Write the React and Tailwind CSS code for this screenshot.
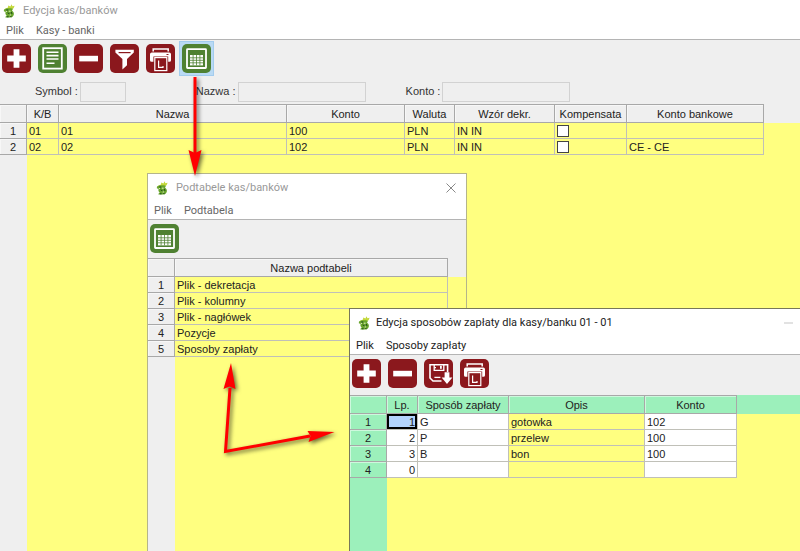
import React from "react";

const RED = "#8b181d";
const GREEN = "#4f8132";

function Tile({ color, children }) {
  return (
    <svg viewBox="0 0 29 29" className="block size-[29px]" aria-hidden="true">
      <rect width="29" height="29" rx="5" fill={color} />
      {children}
    </svg>
  );
}

function PlusIcon() {
  return (
    <Tile color={RED}>
      <path d="M11.6 5.2h5.8v6.4h6.4v5.8h-6.4v6.4h-5.8v-6.4H5.2v-5.8h6.4z" fill="#fff" />
    </Tile>
  );
}

function MinusIcon() {
  return (
    <Tile color={RED}>
      <rect x="5.2" y="11.8" width="18.8" height="5.6" fill="#fff" />
    </Tile>
  );
}

function ListIcon() {
  return (
    <Tile color={GREEN}>
      <rect x="5.2" y="4.2" width="18.6" height="20.4" fill="none" stroke="#fff" strokeWidth="1.8" />
      <path d="M8.500 8.200h12M8.500 11.600h12M8.500 15h12M8.500 19.200h8" stroke="#fff" strokeWidth="1.6" />
    </Tile>
  );
}

function FunnelIcon() {
  return (
    <Tile color={RED}>
      <path d="M5.400 5.800h18.400v2.600L17 15v6.200L12.400 25.400V15L5.400 8.400z" fill="#fff" />
      <path d="M8.600 8.600h12" stroke={RED} strokeWidth="1.2" />
    </Tile>
  );
}

function PrinterIcon() {
  return (
    <Tile color={RED}>
      <path d="M7.200 7.600V5h15v2.600" fill="none" stroke="#fff" strokeWidth="1.500" />
      <path
        d="M4 10.200q0-1.800 1.800-1.800h17.400q1.800 0 1.800 1.800v6q0 1.600-1.600 1.600h-1.200v-5.200H7.400v5.200H5.600q-1.600 0-1.600-1.600z"
        fill="#fff"
      />
      <path d="M20.500 10.500h2" stroke={RED} strokeWidth="1" />
      <rect x="8.800" y="13.600" width="12" height="13" fill={RED} stroke="#fff" strokeWidth="1.200" />
      <path d="M12.600 16.400v7h4.400v-1.400" fill="none" stroke="#fff" strokeWidth="1.200" />
    </Tile>
  );
}

function SaveIcon() {
  return (
    <Tile color={RED}>
      <path d="M17.500 22H9l-3-3V5.800h17.600V13" fill="none" stroke="#fff" strokeWidth="1.6" />
      <path d="M10.200 6v5.400h9.600V6M10 8.600h2" fill="none" stroke="#fff" strokeWidth="1.3" />
      <rect x="16" y="6.800" width="1.800" height="3" fill="#fff" />
      <path d="M10.400 18.400h6" stroke="#fff" strokeWidth="1.3" />
      <path d="M20.600 13.200h4.800v5.400h3L23 25l-5.400-6.400h3z" fill="#fff" />
    </Tile>
  );
}

function TableIcon() {
  return (
    <Tile color={GREEN}>
      <rect x="5" y="5.200" width="19" height="18.800" rx="0.5" fill="none" stroke="#fff" strokeWidth="1.8" />
      <rect x="8" y="11" width="13" height="10.400" fill="#fff" />
      <path
        d="M8 13.800h13M8 16.300h13M8 18.800h13M11.100 11v10.400M14.500 11v10.400M17.900 11v10.400"
        stroke={GREEN}
        strokeWidth="0.8"
      />
    </Tile>
  );
}

function DragonLogo() {
  return (
    <svg viewBox="0 0 12 14" className="block h-3.5 w-3" aria-hidden="true">
      <path d="M2 4.800 5 3.400 5.200 1.400 7.400 2.600 8.600.2 9.400 2.200 11.600 1.800 10.600 4.200 8 5.600 3.600 6.200z" fill="#c3d83a" />
      <path
        d="M1 5.600C3.200 4 6.600 4.200 10 4.800l-1 2c1.600.8 2.200 2.400 1.800 4-.4 1.600-1.800 2.600-3.400 2.800H2.400l.2-1.200 1.200-.6C2.600 11 2 9.400 2.600 8L.8 7.200z"
        fill="#69a52c"
      />
      <path d="M3.200 6h2M4.600 8.800l2 1.200M8.200 8l.8 2M3.800 12.800h1.800M7.200 12.200l1.400.6" stroke="#1f4a1c" strokeWidth="1" />
      <path d="M5.800 7.200h1.800M6.600 11h1.400M2.800 7.400h1.200" stroke="#eef6d4" strokeWidth="0.9" />
    </svg>
  );
}

function ToolButton({ label, icon, active = false }) {
  return (
    <button
      type="button"
      aria-label={label}
      className={active ? "-m-[3px] border border-[#a3ccee] bg-[#b9daf4] p-0.5" : ""}
    >
      {icon}
    </button>
  );
}

function Toolbar({ pad = "pb-1", children }) {
  return <div className={`flex items-center gap-[7px] px-0.5 pt-1 ${pad}`}>{children}</div>;
}

function MenuBar({ items, color }) {
  return (
    <nav className={`flex h-[18px] items-center gap-3 border-b border-[#b4b4b4] bg-white px-1.5 font-[Roboto,sans-serif] text-[11px] ${color}`}>
      {items.map((item) => (
        <button key={item} type="button" className="leading-4">
          {item}
        </button>
      ))}
    </nav>
  );
}

function Filter({ id, label, gap, width }) {
  return (
    <div className={`flex items-center gap-0.5 ${gap}`}>
      <label htmlFor={id}>{label} :</label>
      <input id={id} type="text" readOnly className={`h-5 border border-[#d2d2d2] bg-[#efefef] outline-none ${width}`} />
    </div>
  );
}

function Grid({ columns, rows, tone, strip }) {
  const head = `h-[19px] border-r border-b border-t border-[#a8a8a8] p-0 font-normal shadow-[inset_1px_1px_0_rgba(255,255,255,0.5)] ${tone}`;
  return (
    <div className="flex flex-1 flex-col bg-[#ffff80]">
      <table className="w-full table-fixed border-separate border-spacing-0 text-[11px] leading-[14px] text-[#222]">
        <colgroup>
          <col className={strip} />
          {columns.map((c) => (
            <col key={c.title} className={c.width} />
          ))}
          <col />
        </colgroup>
        <thead>
          <tr>
            <th className={head} />
            {columns.map((c) => (
              <th key={c.title} scope="col" className={head}>
                {c.title}
              </th>
            ))}
            <th className={`p-0 ${tone}`} />
          </tr>
        </thead>
        <tbody>
          {rows.map((row, r) => (
            <tr key={r} className="h-4">
              <th
                scope="row"
                className={`border-r border-b border-[#a8a8a8] px-0 pt-px pb-0 font-normal shadow-[inset_1px_1px_0_rgba(255,255,255,0.5)] ${tone}`}
              >
                {r + 1}
              </th>
              {row.map((cell, c) => {
                const { align = "text-left", fill = "bg-transparent", selectedRow } = columns[c];
                return (
                  <td
                    key={c}
                    className={`overflow-hidden border-r border-b border-[#c0c0b8] px-0.5 pt-px pb-0 whitespace-nowrap ${align} ${
                      selectedRow === r ? "bg-[#b3d4fc] shadow-[inset_0_0_0_2px_#000]" : fill
                    }`}
                  >
                    {cell}
                  </td>
                );
              })}
              <td className="p-0" />
            </tr>
          ))}
        </tbody>
      </table>
      <div className="flex flex-1">
        <div className={`${strip} ${tone}`} />
      </div>
    </div>
  );
}

function Check({ label }) {
  return (
    <input
      type="checkbox"
      aria-label={label}
      className="block size-3 appearance-none border border-[#444] bg-white"
    />
  );
}

const ACCOUNT_COLUMNS = [
  { title: "K/B", width: "w-8" },
  { title: "Nazwa", width: "w-[228px]" },
  { title: "Konto", width: "w-[118px]" },
  { title: "Waluta", width: "w-[50px]" },
  { title: "Wzór dekr.", width: "w-[100px]" },
  { title: "Kompensata", width: "w-[72px]" },
  { title: "Konto bankowe", width: "w-[137px]" },
];

const ACCOUNTS = [
  ["01", "01", "100", "PLN", "IN IN", <Check label="Kompensata 01" />, ""],
  ["02", "02", "102", "PLN", "IN IN", <Check label="Kompensata 02" />, "CE - CE"],
];

const SUBTABLES = [["Plik - dekretacja"], ["Plik - kolumny"], ["Plik - nagłówek"], ["Pozycje"], ["Sposoby zapłaty"]];

const PAYMENT_COLUMNS = [
  { title: "Lp.", width: "w-[31px]", fill: "bg-white", align: "text-right", selectedRow: 0 },
  { title: "Sposób zapłaty", width: "w-[91px]", fill: "bg-white" },
  { title: "Opis", width: "w-[136px]" },
  { title: "Konto", width: "w-[92px]", fill: "bg-white" },
];

const PAYMENTS = [
  ["1", "G", "gotowka", "102"],
  ["2", "P", "przelew", "100"],
  ["3", "B", "bon", "100"],
  ["0", "", "", ""],
];

function Arrows() {
  return (
    <svg
      width="360"
      height="480"
      viewBox="0 0 360 480"
      className="pointer-events-none absolute top-0 left-0 z-30 drop-shadow-[2px_2px_2px_rgba(0,0,0,0.6)]"
      aria-hidden="true"
    >
      <g stroke="#f00" strokeWidth="3" fill="none">
        <path d="M195 77V154" />
        <path d="M230 388L225.500 451.500L310 436" />
      </g>
      <g fill="#f00">
        <path d="M195 176l-6.500-26 6.500 3 6.500-3z" />
        <path d="M231 363l-7.500 26 6-2.500 6 2.500z" />
        <path d="M334.500 432l-27-1 3 5-2 6z" />
      </g>
    </svg>
  );
}

export default function App() {
  return (
    <div className="relative flex min-h-screen flex-col overflow-hidden bg-[#efefef] font-['Liberation_Sans',Arial,sans-serif]">
      <main className="flex flex-1 flex-col">
        <header className="flex h-[22px] items-center gap-2 bg-white px-[3px] font-[Roboto,sans-serif] text-[11px] text-[#999]">
          <DragonLogo />
          <h1>Edycja kas/banków</h1>
        </header>
        <MenuBar items={["Plik", "Kasy - banki"]} color="text-[#666]" />
        <Toolbar>
          <ToolButton label="Dodaj" icon={<PlusIcon />} />
          <ToolButton label="Edytuj" icon={<ListIcon />} />
          <ToolButton label="Usuń" icon={<MinusIcon />} />
          <ToolButton label="Filtruj" icon={<FunnelIcon />} />
          <ToolButton label="Drukuj" icon={<PrinterIcon />} />
          <ToolButton label="Podtabele" icon={<TableIcon />} active />
        </Toolbar>
        <form className="flex h-[27px] items-center pt-1 pb-0.5 pl-[35px] text-[11px] text-[#333]">
          <Filter id="symbol" label="Symbol" gap="mr-[70px]" width="w-[46px]" />
          <Filter id="nazwa" label="Nazwa" gap="mr-10" width="w-32" />
          <Filter id="konto" label="Konto" gap="" width="w-32" />
        </form>
        <Grid columns={ACCOUNT_COLUMNS} rows={ACCOUNTS} tone="bg-[#efefef]" strip="w-[27px]" />
      </main>

      <section className="absolute top-[173px] bottom-0 left-[147px] z-10 flex w-80 flex-col overflow-hidden border-x border-t border-[#b5b58a] bg-[#efefef]">
        <header className="flex h-7 items-center gap-2 bg-white pr-2.5 pl-2 font-[Roboto,sans-serif] text-[11px] text-[#999]">
          <DragonLogo />
          <h2 className="flex-1">Podtabele kas/banków</h2>
          <button type="button" aria-label="Zamknij">
            <svg viewBox="0 0 10 10" className="block size-2.5" aria-hidden="true">
              <path d="M.5.5l9 9M9.500.5l-9 9" stroke="#888" strokeWidth="1" />
            </svg>
          </button>
        </header>
        <MenuBar items={["Plik", "Podtabela"]} color="text-[#666]" />
        <Toolbar pad="pb-[5px]">
          <ToolButton label="Otwórz podtabelę" icon={<TableIcon />} />
        </Toolbar>
        <Grid
          columns={[{ title: "Nazwa podtabeli", width: "w-[273px]" }]}
          rows={SUBTABLES}
          tone="bg-[#efefef]"
          strip="w-[27px]"
        />
      </section>

      <section className="absolute top-[308px] right-0 bottom-0 left-[349px] z-20 flex flex-col overflow-hidden border-t border-l border-[#77775a] bg-[#efefef]">
        <header className="flex h-7 items-center gap-1.5 bg-white pr-[7px] pl-2 font-[Roboto,sans-serif] text-[11px] text-[#222]">
          <DragonLogo />
          <h2 className="flex-1">Edycja sposobów zapłaty dla kasy/banku 01 - 01</h2>
          <button type="button" aria-label="Minimalizuj" className="h-0.5 w-[9px] bg-[#e2e2e2]" />
        </header>
        <MenuBar items={["Plik", "Sposoby zapłaty"]} color="text-[#222]" />
        <Toolbar pad="pb-[7px]">
          <ToolButton label="Dodaj sposób" icon={<PlusIcon />} />
          <ToolButton label="Usuń sposób" icon={<MinusIcon />} />
          <ToolButton label="Zapisz" icon={<SaveIcon />} />
          <ToolButton label="Drukuj sposoby" icon={<PrinterIcon />} />
        </Toolbar>
        <Grid columns={PAYMENT_COLUMNS} rows={PAYMENTS} tone="bg-[#9cf0bb]" strip="w-[37px]" />
      </section>

      <Arrows />
    </div>
  );
}
